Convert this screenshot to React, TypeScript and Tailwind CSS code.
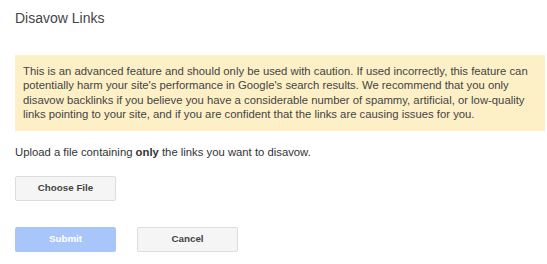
const App = () => {
  return (
    <div
      className="w-[547px] h-[264px] bg-white text-[#333] overflow-hidden"
      style={{ fontFamily: '"Liberation Sans", Arial, sans-serif' }}
    >
      <div className="pl-[15px] pr-[2px]">
        {/* Title */}
        <h1 className="pt-[10px] text-[14px] leading-[17px] text-[#444]">Disavow Links</h1>

        {/* Warning */}
        <div className="mt-[28px] bg-[#fdf0c6] px-[8px] py-[9px] text-[11.3px] leading-[14.4px] text-[#444]">
          This is an advanced feature and should only be used with caution. If used incorrectly, this feature can
          potentially harm your site's performance in Google's search results. We recommend that you only
          disavow backlinks if you believe you have a considerable number of spammy, artificial, or low-quality
          links pointing to your site, and if you are confident that the links are causing issues for you.
        </div>

        <p className="mt-[14px] text-[11.3px] leading-[14px] text-[#333]">
          Upload a file containing <b>only</b> the links you want to disavow.
        </p>

        <button className="mt-[17px] w-[101px] h-[25px] rounded-[2px] border border-[#ddd] bg-[#f5f5f5] text-[9.8px] font-bold text-[#444]">
          Choose File
        </button>

        <div className="mt-[26px] flex gap-[21px]">
          <button className="w-[101px] h-[25px] rounded-[2px] bg-[#a8c6fa] text-[9.8px] font-bold text-white">
            Submit
          </button>
          <button className="w-[101px] h-[25px] rounded-[2px] border border-[#ddd] bg-[#f5f5f5] text-[9.8px] font-bold text-[#444]">
            Cancel
          </button>
        </div>
      </div>
    </div>
  );
};

export default App;
